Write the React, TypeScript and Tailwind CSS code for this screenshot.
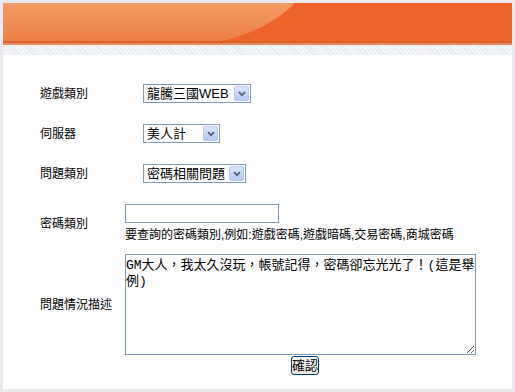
import React from "react";

// 下拉選單（XP 風格）
function XpSelect({ value, width }: { value: string; width: string }) {
  return (
    <div className={`relative h-[19px] ${width}`}>
      <select
        defaultValue={value}
        className="h-full w-full appearance-none border border-[#7f9db9] bg-white pl-[3px] text-[13px] leading-[17px] text-black outline-none"
      >
        <option>{value}</option>
      </select>
      <span className="pointer-events-none absolute right-[2px] top-[2px] flex h-[15px] w-[15px] items-center justify-center rounded-[2px] border border-[#b9c9ef] bg-gradient-to-b from-[#dce6fb] to-[#b7caf5]">
        <svg width="8" height="6" viewBox="0 0 8 6">
          <path d="M1 1.2 L4 4.2 L7 1.2" fill="none" stroke="#4d6185" strokeWidth="1.8" />
        </svg>
      </span>
    </div>
  );
}

const font = "font-['Liberation_Sans','Noto_Sans_CJK_TC',sans-serif]";

export default function App() {
  return (
    <div className={`h-[392px] w-[515px] bg-[#ede9ee] p-[3px] ${font} text-black`}>
      <div className="flex h-full flex-col bg-white">
        {/* 頁首 */}
        <div className="relative h-[42px] w-full">
          <svg width="509" height="42" viewBox="0 0 509 42" className="block">
            <defs>
              <linearGradient id="hl" x1="0" y1="0" x2="0" y2="1">
                <stop offset="0" stopColor="#f39b63" />
                <stop offset="1" stopColor="#ec7c43" />
              </linearGradient>
            </defs>
            <rect width="509" height="42" fill="#ec6429" />
            <path d="M0 0 H292 C270 22 242 34 202 42 H0 Z" fill="url(#hl)" />
            <rect y="38" width="509" height="2" fill="#d9642f" />
            <rect y="40" width="509" height="2" fill="#e98a5c" />
          </svg>
        </div>
        <div className="h-[10px] w-full bg-[repeating-linear-gradient(45deg,#e6eaf0_0_1px,#f5f7f9_1px_3px)]" />

        {/* 表單 */}
        <div className="flex flex-col pl-[37px] pt-[29px] text-[12px]">
          <div className="flex flex-col gap-[21px]">
            <div className="flex h-[19px] items-center">
              <span className="w-[103px]">遊戲類別</span>
              <XpSelect value="龍騰三國WEB" width="w-[108px]" />
            </div>
            <div className="flex h-[19px] items-center">
              <span className="w-[103px]">伺服器</span>
              <XpSelect value="美人計" width="w-[77px]" />
            </div>
            <div className="flex h-[19px] items-center">
              <span className="w-[103px]">問題類別</span>
              <XpSelect value="密碼相關問題" width="w-[103px]" />
            </div>
          </div>

          <div className="mt-[21px] flex items-center">
            <span className="w-[85px]">密碼類別</span>
            <div className="flex flex-col">
              <input
                type="text"
                className="h-[19px] w-[154px] border border-[#7f9db9] bg-white px-[2px] text-[13px] outline-none"
              />
              <span className="mt-[4px] leading-[16px]">
                要查詢的密碼類別,例如:遊戲密碼,遊戲暗碼,交易密碼,商城密碼
              </span>
            </div>
          </div>

          <div className="mt-[11px] flex items-center">
            <span className="w-[85px]">問題情況描述</span>
            <textarea
              defaultValue="GM大人，我太久沒玩，帳號記得，密碼卻忘光光了！(這是舉例)"
              className="h-[101px] w-[351px] border border-[#7f9db9] bg-white px-0 pt-[3px] font-['Liberation_Mono','Noto_Sans_CJK_TC',monospace] text-[13px] leading-[16px] outline-none"
            />
          </div>

          <div className="flex pl-[251px] pt-[1px]">
            <button className="h-[19px] w-[28px] rounded-[3px] border border-[#003c74] bg-gradient-to-b from-white to-[#e6e3d6] p-0 text-[13px] leading-[15px]">
              確認
            </button>
          </div>
        </div>
      </div>
    </div>
  );
}
